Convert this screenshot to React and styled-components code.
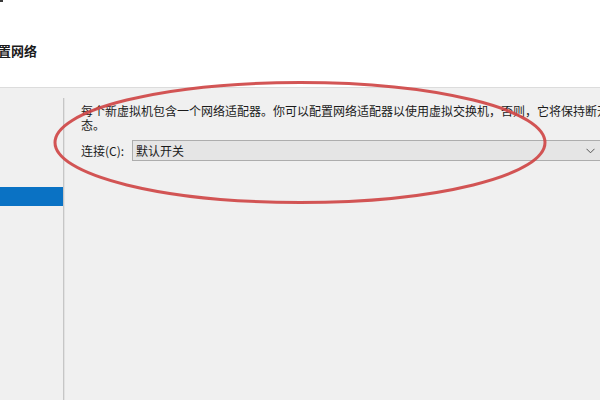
import styled, { createGlobalStyle } from "styled-components"

const Global = createGlobalStyle`
  html, body {
    margin: 0;
    padding: 0;
    background: #f0f0f0;
  }
`

const Page = styled.div`
  position: relative;
  width: 600px;
  height: 400px;
  overflow: hidden;
  background: #f0f0f0;
  font-family: "Noto Sans CJK SC", "Noto Sans", sans-serif;
  color: #1b1b1b;
  display: flex;
  flex-direction: column;
`

const Header = styled.div`
  height: 87px;
  flex: 0 0 87px;
  background: #ffffff;
  border-bottom: 1px solid #dcdcdc;
`

const Corner = styled.div`
  width: 3px;
  height: 2px;
  background: #3a3a3a;
`

const Title = styled.h1`
  margin: 40px 0 0 -15px;
  font-size: 13px;
  line-height: 18px;
  font-weight: 700;
  white-space: nowrap;
`

const Body = styled.div`
  flex: 1;
  display: flex;
  padding-top: 10px;
  min-height: 0;
`

const Nav = styled.div`
  flex: 0 0 63px;
  padding-top: 89px;
`

const NavItem = styled.div`
  height: 19px;
  background: ${(p) => (p.$active ? "#0a72c4" : "transparent")};
`

const Pane = styled.div`
  flex: 1;
  min-width: 0;
  border-left: 1px solid #c6c6c6;
  box-shadow: inset 1px 0 0 #e2e2e2;
  padding: 6px 0 0 17px;
  display: flex;
  flex-direction: column;
  gap: 8px;
`

const Desc = styled.p`
  margin: 0;
  width: 546px;
  font-size: 12px;
  line-height: 14px;
`

const Row = styled.div`
  display: flex;
  align-items: center;
  width: 530px;
`

const Label = styled.span`
  flex: 0 0 51px;
  font-size: 12px;
  line-height: 14px;
  white-space: nowrap;
`

const Select = styled.div`
  flex: 0 0 472px;
  height: 21px;
  box-sizing: border-box;
  border: 1px solid #adadad;
  background: #e5e5e5;
  display: flex;
  align-items: center;
  justify-content: space-between;
  padding: 0 8px 0 3px;
  font-size: 12px;
`

const Chevron = () => (
  <svg width="9" height="6" viewBox="0 0 9 6">
    <path d="M0.5 0.8 L4.5 4.8 L8.5 0.8" fill="none" stroke="#555" strokeWidth="1" />
  </svg>
)

const Mark = styled.svg`
  position: absolute;
  left: 0;
  top: 0;
  pointer-events: none;
`

export default function App() {
  return (
    <Page>
      <Global />
      <Header>
        <Corner />
        <Title>配置网络</Title>
      </Header>
      <Body>
        <Nav>
          <NavItem $active />
        </Nav>
        <Pane>
          <Desc>
            每个新虚拟机包含一个网络适配器。你可以配置网络适配器以使用虚拟交换机，否则，它将保持断开状态。
          </Desc>
          <Row>
            <Label>连接(C):</Label>
            <Select>
              <span>默认开关</span>
              <Chevron />
            </Select>
          </Row>
        </Pane>
      </Body>
      <Mark width="600" height="400" viewBox="0 0 600 400">
        <ellipse
          cx="300"
          cy="142.5"
          rx="245"
          ry="60"
          fill="none"
          stroke="#cf4646"
          strokeWidth="3"
          opacity="0.92"
        />
      </Mark>
    </Page>
  )
}
